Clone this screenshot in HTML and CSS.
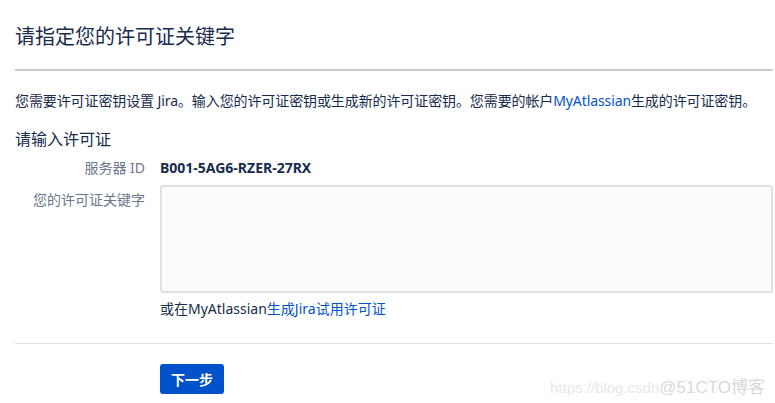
FILE: index.html
```html
<!DOCTYPE html>
<html lang="zh-CN">
<head>
    <meta charset="UTF-8">
    <meta name="viewport" content="width=device-width, initial-scale=1.0">
    <title>请指定您的许可证关键字</title>
    <link rel="stylesheet" href="styles.css">
</head>
<body>
    <div class="page">
        <h1 class="title">请指定您的许可证关键字</h1>

        <p class="intro">您需要许可证密钥设置 Jira。输入您的许可证密钥或生成新的许可证密钥。您需要的帐户<a href="#">MyAtlassian</a>生成的许可证密钥。</p>

        <h2 class="section">请输入许可证</h2>

        <!-- License form -->
        <div class="field">
            <div class="label">服务器 ID</div>
            <div class="server-id">B001-5AG6-RZER-27RX</div>
        </div>

        <div class="field key-field">
            <div class="label">您的许可证关键字</div>
            <div class="control">
                <textarea class="key-input"></textarea>
                <div class="hint">或在MyAtlassian<a href="#">生成Jira试用许可证</a></div>
            </div>
        </div>

        <div class="buttons">
            <button class="next-btn">下一步</button>
        </div>
    </div>

    <div class="watermark">https://blog.csdn<span>@51CTO博客</span></div>
</body>
</html>
```

FILE: styles.css
```css
body {
    margin: 0;
    background-color: #fff;
    color: #172b4d;
    font-family: "Segoe UI", "Noto Sans", "Noto Sans CJK SC", sans-serif;
    font-size: 14px;
}

a {
    color: #0052cc;
    text-decoration: none;
}

.page {
    padding: 0 2px 0 15px;
}

/* Page heading */
.title {
    margin: 0;
    padding: 22px 0 17px;
    font-size: 20px;
    font-weight: 400;
    line-height: 30px;
    border-bottom: 2px solid #ccc;
}

.intro {
    margin: 19px 0 0;
    line-height: 22px;
    letter-spacing: -0.1px;
}

.section {
    margin: 16px 0 0;
    font-size: 16px;
    font-weight: 400;
    line-height: 22px;
}

/* Form rows */
.field {
    display: flex;
    align-items: flex-start;
    margin-top: 7px;
}

.label {
    width: 130px;
    padding-right: 15px;
    text-align: right;
    color: #6b778c;
    line-height: 22px;
}

.server-id {
    font-weight: 700;
    line-height: 22px;
}

.key-field {
    margin-top: 6px;
}

.key-field .label {
    padding-top: 4px;
}

.control {
    flex: 1;
}

.key-input {
    display: block;
    box-sizing: border-box;
    width: 100%;
    height: 108px;
    margin: 0;
    border: 2px solid #dfe1e6;
    border-radius: 3px;
    background-color: #fafbfc;
    resize: none;
}

.hint {
    margin-top: 5px;
    line-height: 22px;
}

.buttons {
    margin-top: 23px;
    padding: 20px 0 0 145px;
    border-top: 1px solid #e0e0e0;
}

.next-btn {
    height: 30px;
    padding: 0 11px;
    border: none;
    border-radius: 3px;
    background-color: #0052cc;
    color: #fff;
    font-family: inherit;
    font-size: 14px;
    font-weight: 700;
    cursor: pointer;
}

/* Blog watermark */
.watermark {
    position: absolute;
    right: 10px;
    top: 373px;
    color: #e8e8e8;
    font-family: "Liberation Sans", "Noto Sans CJK SC", sans-serif;
    font-size: 15px;
}

.watermark span {
    color: #d9d9d9;
    font-size: 17px;
}
```
